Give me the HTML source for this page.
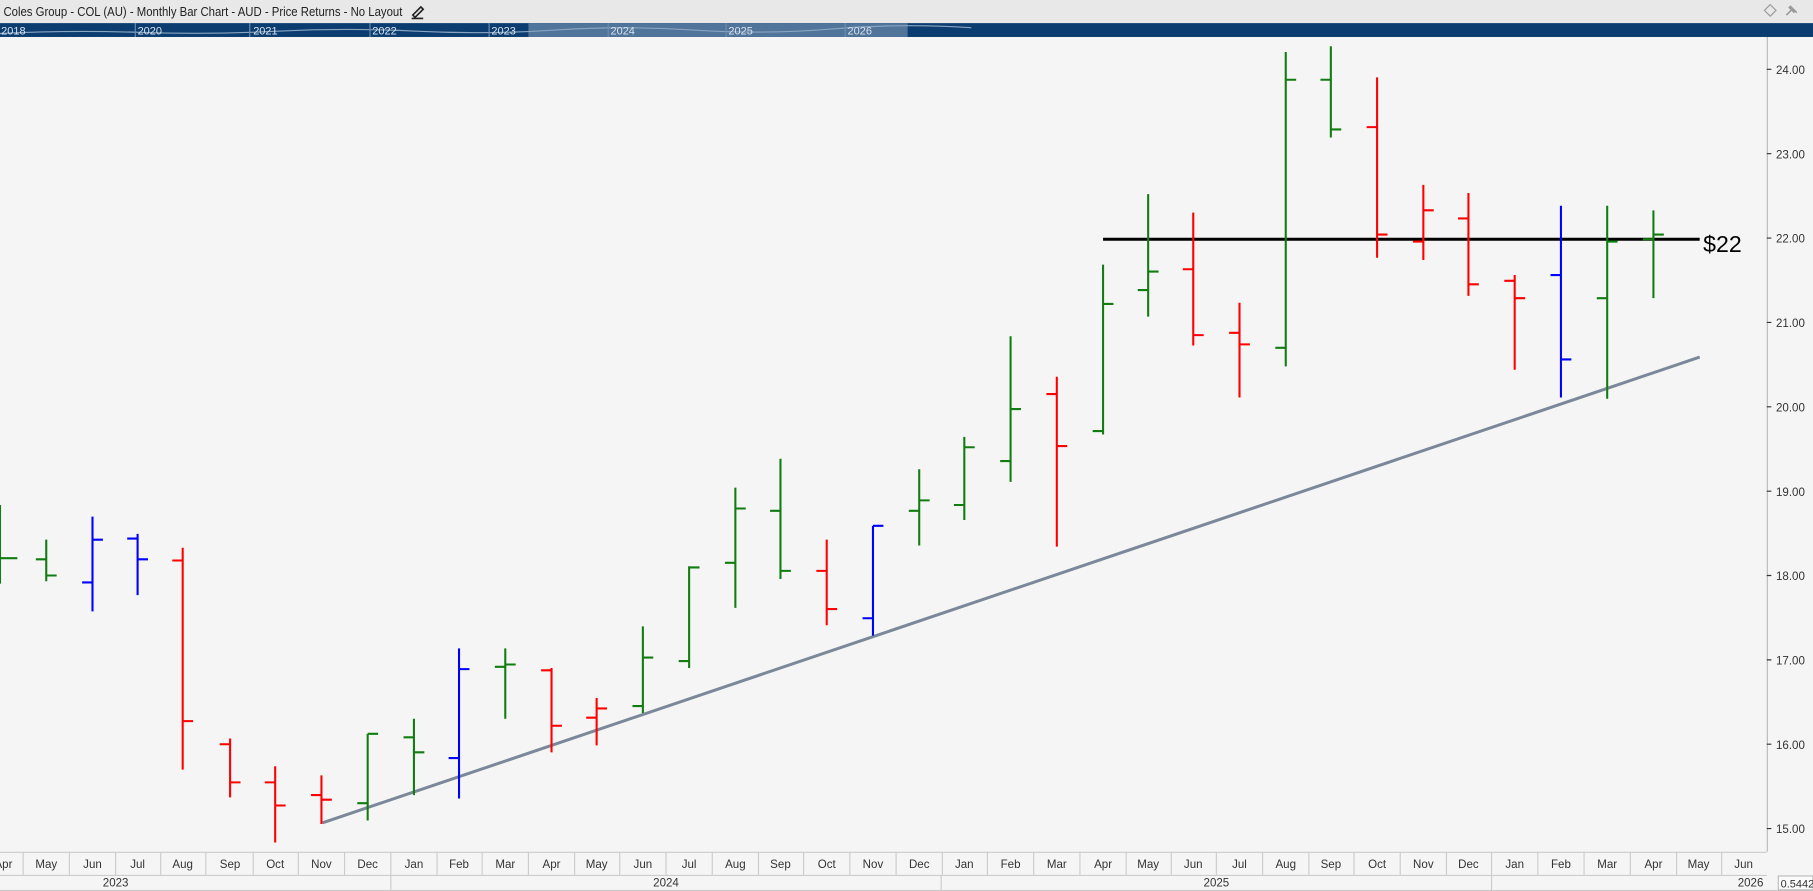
<!DOCTYPE html>
<html><head><meta charset="utf-8"><style>
body{margin:0;width:1813px;height:891px;overflow:hidden;background:#f5f5f5;font-family:"Liberation Sans",sans-serif}
svg{display:block}
</style></head><body>
<svg width="1813" height="891" viewBox="0 0 1568 771" preserveAspectRatio="none" xmlns="http://www.w3.org/2000/svg" font-family="Liberation Sans, sans-serif">
<rect x="0" y="0" width="1568" height="771" fill="#f5f5f5"/>
<rect x="0" y="0" width="1568" height="20" fill="#e8e8e8"/>
<text x="3" y="14" font-size="10.8" fill="#222" textLength="345" lengthAdjust="spacingAndGlyphs">Coles Group - COL (AU) - Monthly Bar Chart - AUD - Price Returns - No Layout</text>
<path d="M357 13l7-7 2 2-7 7zM356 16h10" stroke="#222" stroke-width="1.4" fill="none"/>
<path d="M1531 4l5 5-5 5-5-5z" stroke="#999" fill="none"/>
<path d="M1545 13l4-4m-2-3l5 5m-4-6l6 6" stroke="#999" stroke-width="1.4"/>
<rect x="0" y="20" width="1568" height="12" fill="#0b3d70"/>
<rect x="457" y="20" width="328" height="12" fill="#50749a"/>
<path d="M0 29 Q60 26 120 28 T240 27 T360 27 T480 26 T600 26 T720 25 T840 24" stroke="#8aa4c0" fill="none"/>
<g stroke="#6f8cae"><path d="M117 20v12M216 20v12M320 20v12M423 20v12M526 20v12M628 20v12M731 20v12"/></g>
<g fill="#d8e2ee" font-size="9.5"><text x="1" y="30">2018</text><text x="119" y="30">2020</text><text x="219" y="30">2021</text><text x="322" y="30">2022</text><text x="425" y="30">2023</text><text x="528" y="30">2024</text><text x="630" y="30">2025</text><text x="733" y="30">2026</text></g>
<!-- axis -->
<path d="M1528.5 32V737" stroke="#bbb"/>
<g font-size="10" fill="#333">
<text x="1536" y="64">24.00</text><text x="1536" y="137">23.00</text><text x="1536" y="210">22.00</text><text x="1536" y="283">21.00</text><text x="1536" y="356">20.00</text><text x="1536" y="429">19.00</text><text x="1536" y="502">18.00</text><text x="1536" y="575">17.00</text><text x="1536" y="648">16.00</text><text x="1536" y="721">15.00</text>
</g>
<path d="M1528 60h4M1528 133h4M1528 206h4M1528 279h4M1528 352h4M1528 425h4M1528 498h4M1528 571h4M1528 644h4M1528 717h4" stroke="#333"/>
<!-- bottom axis -->
<path d="M0 737.5H1528M0 757.5H1528M0 770.5H1568" stroke="#ccc"/>
<g stroke="#ccc"><path d="M20 737v20M60 737v20M100 737v20M139 737v20M178 737v20M219 737v20M258 737v20M298 737v20M338 737v20M378 737v20M417 737v20M457 737v20M497 737v20M536 737v20M576 737v20M616 737v20M656 737v20M695 737v20M735 737v20M775 737v20M815 737v20M854 737v20M894 737v20M934 737v20M974 737v20M1013 737v20M1052 737v20M1092 737v20M1132 737v20M1171 737v20M1211 737v20M1251 737v20M1290 737v20M1330 737v20M1370 737v20M1410 737v20M1450 737v20M1489 737v20M338 757v14M814 757v14M1290 757v14"/></g>
<g font-size="10" fill="#333" text-anchor="middle">
<text x="3" y="751">Apr</text><text x="40" y="751">May</text><text x="80" y="751">Jun</text><text x="119" y="751">Jul</text><text x="158" y="751">Aug</text><text x="199" y="751">Sep</text><text x="238" y="751">Oct</text><text x="278" y="751">Nov</text><text x="318" y="751">Dec</text><text x="358" y="751">Jan</text><text x="397" y="751">Feb</text><text x="437" y="751">Mar</text><text x="477" y="751">Apr</text><text x="516" y="751">May</text><text x="556" y="751">Jun</text><text x="596" y="751">Jul</text><text x="636" y="751">Aug</text><text x="675" y="751">Sep</text><text x="715" y="751">Oct</text><text x="755" y="751">Nov</text><text x="795" y="751">Dec</text><text x="834" y="751">Jan</text><text x="874" y="751">Feb</text><text x="914" y="751">Mar</text><text x="954" y="751">Apr</text><text x="993" y="751">May</text><text x="1032" y="751">Jun</text><text x="1072" y="751">Jul</text><text x="1112" y="751">Aug</text><text x="1151" y="751">Sep</text><text x="1191" y="751">Oct</text><text x="1231" y="751">Nov</text><text x="1270" y="751">Dec</text><text x="1310" y="751">Jan</text><text x="1350" y="751">Feb</text><text x="1390" y="751">Mar</text><text x="1430" y="751">Apr</text><text x="1469" y="751">May</text><text x="1508" y="751">Jun</text>
<text x="100" y="767">2023</text><text x="576" y="767">2024</text><text x="1052" y="767">2025</text><text x="1514" y="767">2026</text>
</g>
<rect x="1538" y="758" width="30" height="12" fill="#fafafa" stroke="#bbb"/>
<text x="1540" y="768" font-size="9.5" fill="#333">0.5442</text>
<!-- trend line -->
<path d="M279 712L1470 309" stroke="#7a8899" stroke-width="2.6"/>
<path d="M954 207H1470" stroke="#000" stroke-width="2.6"/>
<text x="1473" y="218" font-size="20" fill="#000">$22</text>
<!-- bars -->
<g stroke-width="1.8" fill="none">
<path stroke="#117d11" d="M0 437V505M0 483H15
M40 467V503M31 484H40M40 498H49
M318 635V710M309 695H318M318 635H327
M358 622V688M349 638H358M358 651H367
M437 561V622M428 577H437M437 575H446
M556 542V617M547 611H556M556 569H565
M596 490V578M587 572H596M596 491H605
M636 422V526M627 487H636M636 440H645
M675 397V501M666 442H675M675 494H684
M795 406V472M786 442H795M795 433H804
M834 378V450M825 437H834M834 387H843
M874 291V417M865 399H874M874 354H883
M954 229V376M945 373H954M954 263H963
M993 168V274M984 251H993M993 235H1002
M1112 45V317M1103 301H1112M1112 69H1121
M1151 40V119M1142 69H1151M1151 112H1160
M1390 178V345M1381 258H1390M1390 209H1399
M1430 182V258M1421 207H1430M1430 203H1439"/>
<path stroke="#ff0000" d="M158 474V666M149 485H158M158 624H167
M199 639V690M190 644H199M199 677H208
M238 663V729M229 677H238M238 697H247
M278 671V713M269 688H278M278 692H287
M477 578V651M468 580H477M477 628H486
M516 604V645M507 621H516M516 613H525
M715 467V541M706 494H715M715 527H724
M914 326V473M905 341H914M914 386H923
M1032 184V299M1023 233H1032M1032 290H1041
M1072 262V344M1063 288H1072M1072 298H1081
M1191 67V223M1182 110H1191M1191 203H1200
M1231 160V225M1222 209H1231M1231 182H1240
M1270 167V256M1261 189H1270M1270 246H1279
M1310 238V320M1301 243H1310M1310 258H1319"/>
<path stroke="#0000ff" d="M80 447V529M71 504H80M80 467H89
M119 462V515M110 466H119M119 484H128
M397 561V691M388 656H397M397 579H406
M755 455V550M746 535H755M755 455H764
M1350 178V344M1341 238H1350M1350 311H1359"/>
</g>
</svg>
</body></html>
